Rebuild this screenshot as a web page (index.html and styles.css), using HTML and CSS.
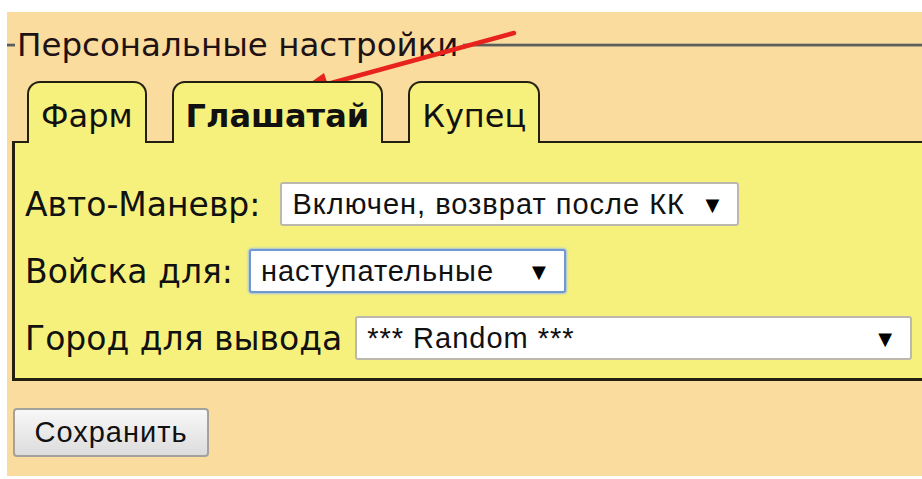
FILE: index.html
```html
<!DOCTYPE html>
<html lang="ru">
<head>
<meta charset="utf-8">
<title>Персональные настройки</title>
<link rel="stylesheet" href="styles.css">
</head>
<body>
<div class="sheet">
  <div class="legend">
    <span class="legend-rule legend-rule-short"></span>
    <span class="legend-title">Персональные настройки</span>
    <span class="legend-rule"></span>
  </div>

  <div class="tabs">
    <div class="tab">Фарм</div>
    <div class="tab tab-active">Глашатай</div>
    <div class="tab">Купец</div>
  </div>

  <div class="panel">
    <div class="row">
      <span class="label label-mode">Авто-Маневр:</span>
      <div class="select select-mode"><span>Включен, возврат после КК</span><span class="caret">▼</span></div>
    </div>
    <div class="row">
      <span class="label">Войска для:</span>
      <div class="select select-troops select-focus"><span>наступательные</span><span class="caret">▼</span></div>
    </div>
    <div class="row">
      <span class="label label-city">Город для вывода</span>
      <div class="select select-city"><span>*** Random ***</span><span class="caret">▼</span></div>
    </div>
  </div>

  <button class="save" type="button">Сохранить</button>
</div>

<svg class="pointer" width="922" height="479" viewBox="0 0 922 479">
  <line x1="514" y1="33" x2="324" y2="85" stroke="#e8221c" stroke-width="4.5" stroke-linecap="round"/>
  <polygon points="297,92 324,73 331,94" fill="#e8221c"/>
</svg>
</body>
</html>
```

FILE: styles.css
```css
html, body {
  margin: 0;
  padding: 0;
}

body {
  position: relative;
  width: 922px;
  height: 479px;
  overflow: hidden;
  background: #ffffff;
  font-family: "DejaVu Sans", Verdana, sans-serif;
  color: #141210;
}

.sheet {
  margin: 12px 0 0 7px;
  height: 464px;
  background: #f9dc9e;
  display: flex;
  flex-direction: column;
}

/* fieldset-style heading: rule, title, rule */
.legend {
  display: flex;
  align-items: center;
  height: 40px;
  margin-top: 13px;
}

.legend-rule {
  flex: 1;
  height: 2px;
  background: #5f5d57;
  box-shadow: 0 1px 0 #b0a588, 0 -1px 0 #c4b794;
}

.legend-rule-short {
  flex: 0 0 8px;
}

.legend-title {
  font-size: 32.5px;
  line-height: 40px;
  color: #1f1214;
  padding: 0 4px 0 2px;
  white-space: nowrap;
}

/* tab strip */
.tabs {
  display: flex;
  gap: 25px;
  margin: 16px 0 0 20px;
}

.tab {
  position: relative;
  z-index: 1;
  height: 54px;
  padding: 6px 12px 0;
  line-height: 54px;
  font-size: 32px;
  color: #111;
  background: #f6f17c;
  border: 2px solid #23200f;
  border-bottom: 0;
  border-radius: 13px 13px 0 0;
  margin-bottom: -2px;
}

.tab-active {
  font-weight: bold;
}

/* settings panel */
.panel {
  margin-left: 5px;
  background: #f6f17c;
  border-top: 2px solid #23200f;
  border-left: 3px solid #23200f;
  border-bottom: 3px solid #23200f;
  padding: 39px 0 18px 10px;
  display: flex;
  flex-direction: column;
  gap: 23px;
}

.row {
  display: flex;
  align-items: center;
  height: 44px;
}

.label {
  font-size: 33px;
  color: #111;
  margin-right: 16px;
  white-space: nowrap;
}

.label-mode {
  margin-right: 20px;
}

.label-city {
  margin-right: 13px;
}

.select {
  box-sizing: border-box;
  height: 44px;
  display: flex;
  align-items: center;
  padding: 0 18px 0 10px;
  background: #ffffff;
  border: 2px solid #bcb9ac;
  border-radius: 3px;
  font-family: "Liberation Sans", Arial, sans-serif;
  font-size: 29px;
  letter-spacing: 1px;
  color: #111;
  white-space: nowrap;
}

.select-mode {
  width: 459px;
}

.select-troops {
  width: 317px;
}

.select-city {
  width: 557px;
}

.select-focus {
  border-color: #6f98cf;
  box-shadow: 0 0 2px 1px #a4c0e6;
}

.caret {
  margin-left: auto;
  font-family: "DejaVu Sans", sans-serif;
  font-size: 18px;
  letter-spacing: 0;
  color: #000;
}

.save {
  align-self: flex-start;
  margin: 27px 0 0 6px;
  width: 196px;
  height: 49px;
  padding: 0;
  border: 2px solid #a4a29c;
  border-radius: 4px;
  background: linear-gradient(#f8f8f8, #dcdcdc);
  font-family: "Liberation Sans", Arial, sans-serif;
  font-size: 29px;
  letter-spacing: 1px;
  color: #111;
}

/* red pointer drawn over the heading */
.pointer {
  position: absolute;
  top: 0;
  left: 0;
  pointer-events: none;
}
```
